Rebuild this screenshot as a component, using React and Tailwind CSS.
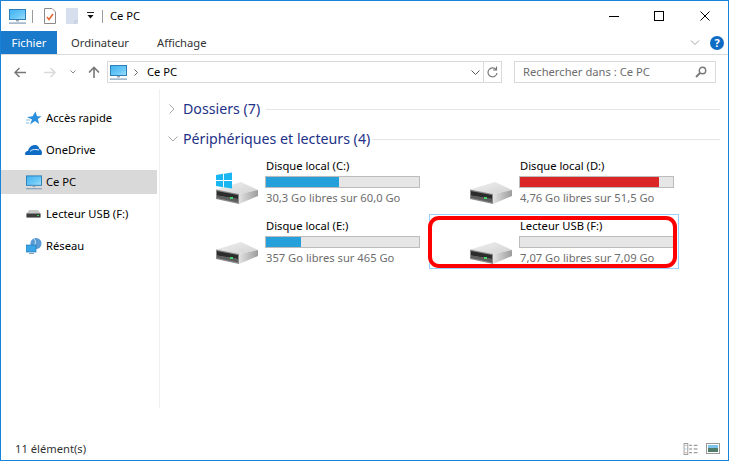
import React from "react";

const font = { fontFamily: '"Noto Sans", "Open Sans", sans-serif' };

function Monitor({ w = 17, h = 15, stand = "#7f9db9" }) {
  return (
    <svg width={w} height={h} viewBox="0 0 17 15" className="block shrink-0">
      <defs>
        <linearGradient id="scr" x1="0" y1="0" x2="1" y2="1">
          <stop offset="0" stopColor="#3fb2f2" />
          <stop offset="0.6" stopColor="#6cc8f7" />
          <stop offset="1" stopColor="#a4e0fb" />
        </linearGradient>
      </defs>
      <rect x="0.5" y="0.5" width="16" height="10" fill="url(#scr)" stroke="#2c7fb8" strokeWidth="1" />
      <rect x="7" y="11" width="3" height="1.5" fill="#9aa7b3" />
      <rect x="0" y="13.5" width="17" height="1.2" fill={stand} />
    </svg>
  );
}

function Drive({ win }) {
  return (
    <div className="relative w-[42px] h-[22px] mt-[24px] shrink-0">
      <svg width="42" height="22" viewBox="0 0 42 22" className="absolute left-0 top-0">
        <defs>
          <linearGradient id="top" x1="0" y1="0" x2="1" y2="1">
            <stop offset="0" stopColor="#f0f0f0" />
            <stop offset="1" stopColor="#d2d2d2" />
          </linearGradient>
          <linearGradient id="side" x1="0" y1="0" x2="1" y2="0">
            <stop offset="0" stopColor="#e2e2e2" />
            <stop offset="1" stopColor="#9c9c9c" />
          </linearGradient>
        </defs>
        <path d="M0 7.5L25 0L42 8L23 12Z" fill="url(#top)" />
        <path d="M23 12L42 8V14L23 22Z" fill="url(#side)" />
        <path d="M0 7.5L23 12V22L0 17Z" fill="#8a8a8a" />
        <path d="M1 9L22 13V17L1 13.5Z" fill="#2c2c2c" />
        <path d="M1 13.5L22 17V20.5L1 16Z" fill="#5e5e5e" />
        <rect x="14" y="15" width="3" height="2" fill="#3fd66a" />
      </svg>
      {win && (
        <svg width="16" height="17" viewBox="0 0 17 17" className="absolute left-[0px] top-[-10px]">
          <path d="M0 2.6L7.5 1.4V8H0zM8.5 1.2L17 0V8H8.5zM0 9H7.5V15.6L0 14.4zM8.5 9H17V17L8.5 15.8z" fill="#19b6f2" />
        </svg>
      )}
    </div>
  );
}

function Tile({ name, free, pct, color = "bg-[#26a0da]", win }) {
  return (
    <div className="h-[56px] flex items-start">
      <Drive win={win} />
      <div className="ml-[7px] w-[155px]">
        <div className="text-[11.2px] leading-[16px] text-black pl-[1px]">{name}</div>
        <div className="h-[12px] mt-[2px] bg-[#e6e6e6] border border-[#bcbcbc]">
          <div className={`h-full ${color}`} style={{ width: pct + "%" }} />
        </div>
        <div className="text-[11.2px] leading-[16px] mt-[2px] text-[#6d6d6d] pl-[1px]">{free}</div>
      </div>
    </div>
  );
}

function SideItem({ icon, label, active }) {
  return (
    <div className={`h-[24px] flex items-center pl-[24px] gap-[4px] ${active ? "bg-[#d9d9d9]" : ""}`}>
      <div className="w-[17px] h-[17px] flex items-center justify-center shrink-0">{icon}</div>
      <span className="text-[11.2px] text-black">{label}</span>
    </div>
  );
}

export default function App() {
  return (
    <div style={font} className="relative w-[729px] h-[461px] bg-white border border-[#1883d7] flex flex-col overflow-hidden">
      {/* title bar */}
      <div className="h-[30px] flex items-center shrink-0">
        <div className="ml-[8px]"><Monitor /></div>
        <div className="ml-[6px] w-px h-[13px] bg-[#9a9a9a]" />
        <svg width="12" height="16" viewBox="0 0 12 16" className="ml-[11px]">
          <path d="M0.5 0.5H8L11.5 4V15.5H0.5Z" fill="#fff" stroke="#8a8a8a" />
          <path d="M3 9L5 11.5L9 6" fill="none" stroke="#e8632b" strokeWidth="1.5" />
        </svg>
        <svg width="12" height="16" viewBox="0 0 12 16" className="ml-[10px]">
          <path d="M0 0H12V16H0Z" fill="#d6dfee" />
          <path d="M9 16V13H12" fill="none" stroke="#b9c5da" />
        </svg>
        <svg width="8" height="8" viewBox="0 0 8 8" className="ml-[9px]">
          <rect x="0" y="0" width="7" height="1" fill="#222" />
          <path d="M0.5 3H6.5L3.5 6.5Z" fill="#111" />
        </svg>
        <div className="ml-[7px] w-px h-[13px] bg-[#9a9a9a]" />
        <span className="ml-[7px] text-[11.2px] text-black">Ce PC</span>
        <div className="ml-auto flex items-center mr-[18px]">
          <svg width="10" height="10" viewBox="0 0 10 10" className="mr-[35px]"><path d="M0 5.5H10" stroke="#000" /></svg>
          <svg width="10" height="10" viewBox="0 0 10 10" className="mr-[36px]"><rect x="0.5" y="0.5" width="9" height="9" fill="none" stroke="#000" /></svg>
          <svg width="10" height="10" viewBox="0 0 10 10"><path d="M0.5 0.5L9.5 9.5M9.5 0.5L0.5 9.5" stroke="#000" /></svg>
        </div>
      </div>
      {/* ribbon tabs */}
      <div className="h-[24px] flex items-stretch border-b border-[#dadbdc] shrink-0">
        <div className="w-[56px] bg-[#1979ca] text-white text-[11.2px] flex items-center justify-center pt-[1px]">Fichier</div>
        <div className="ml-[14px] text-[11.2px] text-[#333] flex items-center pt-[1px]">Ordinateur</div>
        <div className="ml-[28px] text-[11.2px] text-[#333] flex items-center pt-[1px]">Affichage</div>
        <div className="ml-auto flex items-center mr-[4px]">
          <svg width="10" height="6" viewBox="0 0 10 6" className="mr-[10px]"><path d="M1 0.5L5 4.5L9 0.5" fill="none" stroke="#a6a6a6" /></svg>
          <div className="w-[14px] h-[14px] rounded-full bg-[#0f6cc4] text-white text-[11px] font-bold flex items-center justify-center leading-none">?</div>
        </div>
      </div>
      {/* nav bar */}
      <div className="h-[34px] flex items-center shrink-0">
        <svg width="12" height="11" viewBox="0 0 12 11" className="ml-[13px]"><path d="M12 5.5H1M5.5 1L1 5.5L5.5 10" fill="none" stroke="#777" strokeWidth="1.5" /></svg>
        <svg width="12" height="11" viewBox="0 0 12 11" className="ml-[18px]"><path d="M0 5.5H11M6.5 1L11 5.5L6.5 10" fill="none" stroke="#d9d9d9" strokeWidth="1.5" /></svg>
        <svg width="6" height="4" viewBox="0 0 6 4" className="ml-[14px]"><path d="M0.5 0.5L3 3L5.5 0.5" fill="none" stroke="#888" /></svg>
        <svg width="12" height="12" viewBox="0 0 12 12" className="ml-[12px]"><path d="M6 12V1.5M1 6.5L6 1.5L11 6.5" fill="none" stroke="#777" strokeWidth="1.6" /></svg>
        <div className="ml-[7px] w-[395px] h-[22px] border border-[#d9d9d9] flex items-center">
          <div className="ml-[2px]"><Monitor /></div>
          <svg width="4" height="7" viewBox="0 0 4 7" className="ml-[7px]"><path d="M0.5 0.5L3.5 3.5L0.5 6.5" fill="none" stroke="#666" /></svg>
          <span className="ml-[9px] text-[11.2px] text-black">Ce PC</span>
          <svg width="9" height="5" viewBox="0 0 9 5" className="ml-auto mr-[3px]"><path d="M0.5 0.5L4.5 4.5L8.5 0.5" fill="none" stroke="#555" /></svg>
          <div className="w-[18px] h-full border-l border-[#d9d9d9] flex items-center justify-center">
            <svg width="11" height="12" viewBox="0 0 11 12"><path d="M9 3.5A4.5 4.5 0 1 0 10 7M9.5 0.5V4H6" fill="none" stroke="#777" strokeWidth="1.2" /></svg>
          </div>
        </div>
        <div className="ml-[12px] w-[202px] h-[22px] border border-[#d9d9d9] flex items-center pl-[8px] pr-[8px]">
          <span className="text-[11.2px] text-[#6d6d6d]">Rechercher dans : Ce PC</span>
          <svg width="12" height="12" viewBox="0 0 12 12" className="ml-auto"><circle cx="7.5" cy="4.5" r="3.2" fill="none" stroke="#777" strokeWidth="1.4" /><path d="M5 7L1 11" stroke="#777" strokeWidth="1.8" /></svg>
        </div>
      </div>
      {/* main */}
      <div className="flex-1 flex min-h-0">
        <div className="w-[156px] shrink-0 pt-[17px] flex flex-col gap-[8px]">
          <SideItem label="Accès rapide" icon={
            <svg width="16" height="15" viewBox="0 0 16 15"><path d="M9.5 0.5L11 5.2H15.5L11.8 8L13.2 13L9 10L4 13.5L6 8.5L1 6L6.5 5.2Z" fill="#2a8fdc" /><path d="M0 9H4M0 12H3" stroke="#7dbdec" /></svg>
          } />
          <SideItem label="OneDrive" icon={
            <svg width="17" height="10" viewBox="0 0 17 10"><path d="M0 9.5C-0.3 6.5 2 6 3 6C4 2 7 0 10 0C12.5 0 14 2 14.5 4C16 4.5 17 6 17 8C17 9 16.5 10 16 10H1Z" fill="#0f6cc4" /><path d="M5 6.5C7 4.5 9 4 14 5" fill="none" stroke="#fff" /></svg>
          } />
          <SideItem active label="Ce PC" icon={<Monitor w={16} h={15} />} />
          <SideItem label="Lecteur USB (F:)" icon={
            <svg width="15" height="8" viewBox="0 0 15 8"><path d="M1 3L3 0H12L14.5 3V7.5H0.5V3Z" fill="#c8c8c8" /><rect x="0.5" y="3.5" width="14" height="4" fill="#3d3d3d" /><rect x="11" y="5" width="2" height="1" fill="#39d353" /></svg>
          } />
          <SideItem label="Réseau" icon={
            <svg width="16" height="16" viewBox="0 0 16 16"><circle cx="10" cy="5.5" r="5.5" fill="#5a9bd4" /><path d="M8 1C10 3 10 5 8 8" fill="none" stroke="#d5e8f7" /><rect x="0" y="7" width="10" height="7" fill="#3aa6e8" stroke="#2277b8" strokeWidth="0.7" /><rect x="3" y="15" width="5" height="1" fill="#8aa0b2" /></svg>
          } />
        </div>
        <div className="w-px self-stretch bg-[#f0f0f0] mb-[31px] ml-[2px]" />
        <div className="flex-1 min-w-0 pl-[8px] pt-[5px] pr-[8px]">
          <div className="flex items-center h-[30px]">
            <svg width="6" height="10" viewBox="0 0 6 10" className="ml-[1px]"><path d="M0.5 0.5L5 5L0.5 9.5" fill="none" stroke="#a6a6a6" /></svg>
            <span className="ml-[8px] text-[14.2px] text-[#1e3287]">Dossiers (7)</span>
            <div className="flex-1 h-px bg-[#e5e5e5] ml-[6px]" />
          </div>
          <div className="flex items-center h-[30px]">
            <svg width="10" height="6" viewBox="0 0 10 6"><path d="M0.5 0.5L5 5L9.5 0.5" fill="none" stroke="#a6a6a6" /></svg>
            <span className="ml-[5px] text-[14.2px] text-[#1e3287]">Périphériques et lecteurs (4)</span>
            <div className="flex-1 h-px bg-[#e5e5e5] ml-[2px]" />
          </div>
          <div className="grid grid-cols-[254px_254px] gap-y-[4px] ml-[48px] mt-[4px]">
            <Tile name="Disque local (C:)" free="30,3 Go libres sur 60,0 Go" pct={48} win />
            <Tile name="Disque local (D:)" free="4,76 Go libres sur 51,5 Go" pct={91} color="bg-[#da2626]" />
            <Tile name="Disque local (E:)" free="357 Go libres sur 465 Go" pct={23} />
            <Tile name="Lecteur USB (F:)" free="7,07 Go libres sur 7,09 Go" pct={0} />
          </div>
        </div>
      </div>
      {/* status bar */}
      <div className="h-[21px] flex items-center shrink-0 pl-[14px] pr-[8px]">
        <span className="text-[11.2px] text-[#333]">11 élément(s)</span>
        <div className="ml-auto flex items-center gap-[7px] mb-[2px]">
          <svg width="16" height="12" viewBox="0 0 16 13"><rect x="0.5" y="0.5" width="4" height="12" fill="#fff" stroke="#999" /><rect x="2" y="2" width="1" height="1" fill="#777" /><rect x="2" y="6" width="1" height="1" fill="#4aa3df" /><rect x="2" y="10" width="1" height="1" fill="#c33" /><path d="M6 2.5H9M11 2.5H15M6 6.5H9M11 6.5H15M6 10.5H9M11 10.5H15" stroke="#777" /></svg>
          <svg width="14" height="11" viewBox="0 0 14 11"><rect x="0.5" y="0.5" width="13" height="10" fill="#fff" stroke="#999" /><rect x="2" y="2" width="10" height="3" fill="#7cc3ee" /><rect x="2" y="5" width="10" height="4" fill="#4f7d6a" /></svg>
        </div>
      </div>
      {/* selection highlight and annotation over the USB tile */}
      <div className="absolute left-[428px] top-[213px] w-[250px] h-[55px] border border-[#99d1ff]" />
      <div className="absolute left-[427px] top-[215px] w-[249px] h-[52px] border-[4px] border-[#ff0000] rounded-[11px]" />
    </div>
  );
}
